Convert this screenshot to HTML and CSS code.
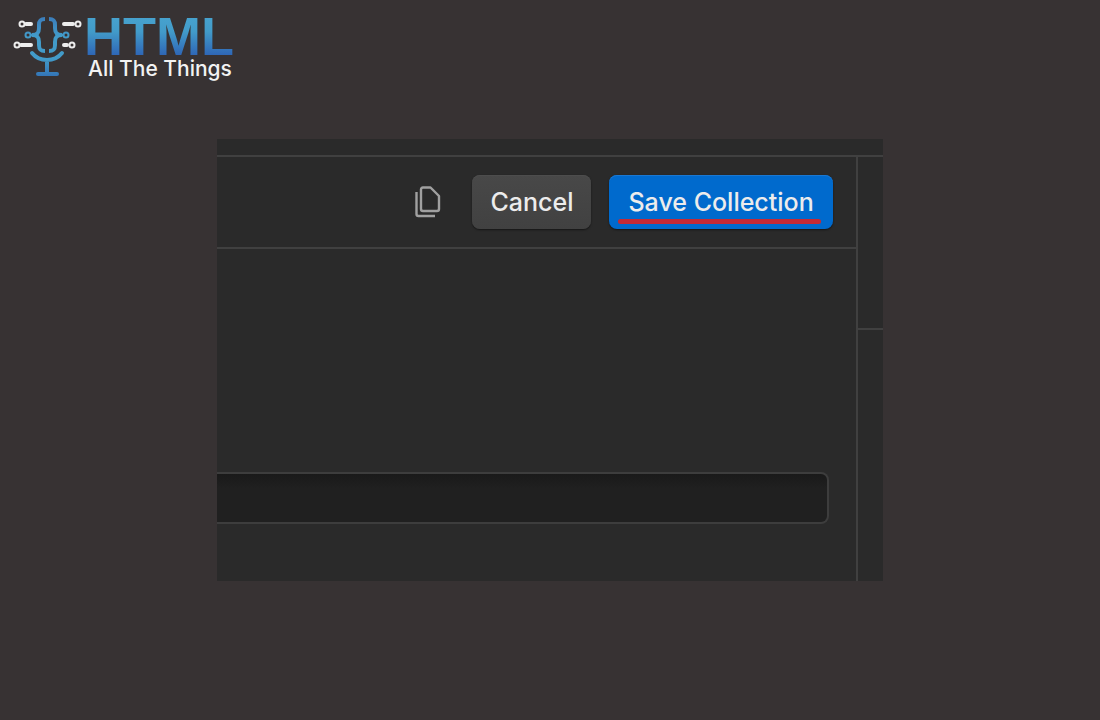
FILE: index.html
```html
<!DOCTYPE html>
<html lang="en">
<head>
    <meta charset="UTF-8">
    <meta name="viewport" content="width=device-width, initial-scale=1.0">
    <title>HTML All The Things</title>
    <link rel="stylesheet" href="styles.css">
</head>
<body>
    <header class="logo">
        <svg class="logo-mark" width="70" height="64" viewBox="0 0 70 64" fill="none" stroke-linecap="round" aria-hidden="true">
            <defs>
                <linearGradient id="blue" gradientUnits="userSpaceOnUse" x1="0" y1="0" x2="0" y2="64">
                    <stop offset="0" stop-color="#3a78b8"/>
                    <stop offset="0.35" stop-color="#429bc9"/>
                    <stop offset="0.7" stop-color="#429bc9"/>
                    <stop offset="1" stop-color="#3271b5"/>
                </linearGradient>
            </defs>
            <!-- braces -->
            <g stroke="url(#blue)" stroke-width="4" stroke-linecap="butt">
                <path d="M32 5C27 5 26 7 26 11V14C26 18 25 21 19 21C25 21 26 24 26 28V31C26 35 27 37 32 37"/>
                <path d="M36 5C41 5 42 7 42 11V14C42 18 43 21 49 21C43 21 42 24 42 28V31C42 35 41 37 36 37"/>
            </g>
            <!-- stand -->
            <g stroke="url(#blue)" stroke-width="4">
                <path d="M19 39C23 44 28 46 34 46S45 44 49 39M34 46V60M25 60H44"/>
            </g>
            <g stroke="url(#blue)" stroke-width="2">
                <circle cx="15" cy="21" r="2.5"/>
                <circle cx="53" cy="21" r="2.5"/>
            </g>
            <path d="M19 21H22M46 21H49" stroke="url(#blue)" stroke-width="3"/>
            <!-- circuit lines -->
            <g stroke="#ededed" stroke-width="4">
                <path d="M13 10H18M51 10H60M8 31H18M51 31H54"/>
                <g stroke-width="2">
                    <circle cx="9" cy="10" r="2.5"/>
                    <circle cx="65" cy="10" r="2.5"/>
                    <circle cx="4" cy="31" r="2.5"/>
                    <circle cx="59" cy="31" r="2.5"/>
                </g>
            </g>
        </svg>
        <div class="logo-text">
            <span class="logo-title">HTML</span>
            <span class="logo-subtitle">All The Things</span>
        </div>
    </header>

    <main class="panel">
        <div class="editor">
            <div class="toolbar">
                <button class="copy-btn" type="button" aria-label="Duplicate">
                    <svg width="28" height="34" viewBox="0 0 28 34" fill="none" stroke="#a0a0a0" stroke-width="2.4" stroke-linejoin="round" aria-hidden="true">
                        <path d="M9 2.500H16.500L25 11V24Q25 26 23 26H9Q7 26 7 24V4.500Q7 2.500 9 2.500Z"/>
                        <path d="M2.500 7V29Q2.500 31 4.500 31H21"/>
                    </svg>
                </button>
                <button class="btn" type="button">Cancel</button>
                <button class="btn save-btn" type="button">Save Collection</button>
            </div>
            <div class="fields">
                <input class="field" type="text" aria-label="Value">
            </div>
        </div>
        <aside class="side">
            <div class="side-top"></div>
        </aside>
    </main>
</body>
</html>
```

FILE: styles.css
```css
* {
    box-sizing: border-box;
}

body {
    margin: 0;
    background-color: #373233;
    font-family: Inter, "Liberation Sans", sans-serif;
}

.logo {
    display: flex;
    gap: 1px;
    padding: 14px 13px 0;
    height: 139px;
}

.logo-text {
    display: flex;
    flex-direction: column;
    font-family: "Liberation Sans", Arial, sans-serif;
}

.logo-title {
    font-size: 54px;
    line-height: 44px;
    font-weight: bold;
    background: linear-gradient(#48a4cf, #429bc9 40%, #2c60b4);
    background-clip: text;
    -webkit-background-clip: text;
    color: transparent;
}

.logo-subtitle {
    padding-left: 4px;
    font-family: Inter, "Liberation Sans", sans-serif;
    font-size: 21px;
    font-weight: 500;
    line-height: 22px;
    color: #f2f2f2;
}

.panel {
    display: flex;
    width: 60.5%;
    margin: 0 auto;
    padding-top: 16px;
    background-color: #2a2a2a;
}

.editor {
    flex: 1;
    border-top: 2px solid #404040;
    border-right: 2px solid #404040;
}

.toolbar {
    display: flex;
    justify-content: flex-end;
    align-items: center;
    gap: 18px;
    padding: 18px 23px 18px 0;
    border-bottom: 2px solid #404040;
}

.copy-btn {
    display: flex;
    margin-right: 12px;
    padding: 0;
    border: none;
    background: none;
    cursor: pointer;
}

.btn {
    position: relative;
    height: 54px;
    padding: 0 18px;
    border: none;
    border-radius: 8px;
    background: linear-gradient(#484848, #414141);
    box-shadow: 0 1px 2px rgba(0, 0, 0, 0.5), inset 0 1px 0 #4d4d4d;
    color: #ececec;
    font-family: inherit;
    font-size: 25px;
    font-weight: 500;
    cursor: pointer;
}

.save-btn {
    padding: 0 19px;
    background: #006acd;
    box-shadow: 0 1px 2px rgba(0, 0, 0, 0.5), inset 0 1px 0 #1a78d2;
}

/* red marker under the label */
.save-btn::after {
    content: "";
    position: absolute;
    left: 9px;
    right: 12px;
    bottom: 5px;
    height: 5px;
    border-radius: 3px;
    background-color: #c42a35;
}

.fields {
    padding: 223px 27px 57px 0;
}

.field {
    display: block;
    width: 100%;
    height: 52px;
    padding: 0 16px;
    border: 2px solid #3d3d3d;
    border-left: none;
    border-radius: 0 8px 8px 0;
    background: linear-gradient(#191919, #202020 30%);
    color: #ececec;
    font-family: inherit;
    font-size: 25px;
}

.side {
    width: 25px;
    border-top: 2px solid #404040;
}

.side-top {
    height: 173px;
    border-bottom: 2px solid #404040;
}
```
